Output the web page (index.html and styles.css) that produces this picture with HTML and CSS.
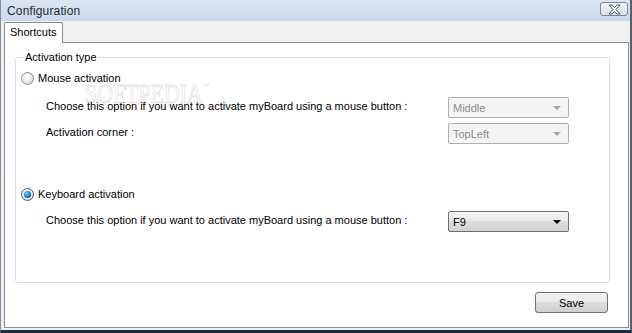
FILE: index.html
```html
<!DOCTYPE html>
<html>
<head>
<meta charset="utf-8">
<link rel="stylesheet" href="styles.css">
</head>
<body>
<div class="window">
  <div class="titlebar">
    <span class="title">Configuration</span>
    <span class="close">
      <svg width="19" height="11" viewBox="0 0 19 11">
        <polygon points="4,1 7,1 9.5,3.5 12,1 15,1 11,5.5 15,10 12,10 9.5,7.5 7,10 4,10 8,5.5" fill="#fff" stroke="#4a5566" stroke-width="1" stroke-linejoin="round"/>
      </svg>
    </span>
  </div>
  <div class="tabs">
    <div class="tab">Shortcuts</div>
  </div>
  <div class="panel">
    <fieldset class="group">
      <legend class="legend">Activation type</legend>
      <span class="watermark">SOFTPEDIA<sup>™</sup></span>
      <div class="row radio-row first">
        <span class="radio"></span>
        <span class="rlabel">Mouse activation</span>
      </div>
      <div class="row opt-row r2">
        <span class="label">Choose this option if you want to activate myBoard using a mouse button :</span>
        <span class="select disabled"><span class="val">Middle</span><span class="arrow"></span></span>
      </div>
      <div class="row opt-row r3">
        <span class="label">Activation corner :</span>
        <span class="select disabled"><span class="val">TopLeft</span><span class="arrow"></span></span>
      </div>
      <div class="row radio-row r4">
        <span class="radio checked"><span class="dot"></span></span>
        <span class="rlabel">Keyboard activation</span>
      </div>
      <div class="row opt-row r5">
        <span class="label">Choose this option if you want to activate myBoard using a mouse button :</span>
        <span class="select"><span class="val">F9</span><span class="arrow"></span></span>
      </div>
    </fieldset>
    <div class="footer">
      <button class="btn">Save</button>
    </div>
  </div>
</div>
</body>
</html>
```

FILE: styles.css
```css
* { box-sizing: border-box; }
html, body { margin: 0; padding: 0; }
body {
  width: 632px;
  height: 333px;
  overflow: hidden;
  font-family: "Liberation Sans", Arial, sans-serif;
  font-size: 11px;
  color: #000;
}
.window {
  width: 632px;
  height: 333px;
  background: #f0f0f0;
  border-left: 1px solid #7f8d9d;
  border-right: 2px solid #55606e;
  border-bottom: 3px solid #1d2a45;
  display: flex;
  flex-direction: column;
}
.titlebar {
  height: 21px;
  flex: none;
  display: flex;
  align-items: center;
  justify-content: space-between;
  padding: 0 2px 0 6px;
  background: linear-gradient(#d9e5f2, #cbd9ea);
}
.title {
  font-size: 12px;
  color: #1f2a36;
  letter-spacing: 0.15px;
}
.close {
  width: 28px;
  height: 14px;
  margin-top: -3px;
  border: 1px solid #7d8796;
  border-radius: 3px;
  background: linear-gradient(#f2f5f9, #d7dfe9);
  display: flex;
  align-items: center;
  justify-content: center;
}
.close svg { display: block; }
.tabs {
  height: 21px;
  flex: none;
  display: flex;
  align-items: flex-end;
  padding-left: 3px;
}
.tab {
  height: 21px;
  width: 59px;
  margin-bottom: -1px;
  position: relative;
  z-index: 1;
  background: #fff;
  border: 1px solid #898c95;
  border-bottom: none;
  border-radius: 2px 2px 0 0;
  padding: 3px 0 0 5px;
  font-size: 11px;
}
.panel {
  flex: 1;
  margin: 0 1px 2px 3px;
  background: #fff;
  border: 1px solid #898c95;
  padding: 7px 18px 0 10px;
  display: flex;
  flex-direction: column;
}
.group {
  margin: 0;
  height: 233px;
  border: 1px solid #d5dfe5;
  border-radius: 3px;
  padding: 0 0 0 5px;
  position: relative;
}
.legend {
  padding: 0 2px 0 1px;
  margin-left: 3px;
  line-height: 14px;
  font-size: 11px;
}
.row {
  display: flex;
  align-items: center;
  position: relative;
}
.radio-row { height: 20px; }
.first { margin-top: 4px; }
.r4 { margin-top: 40px; }
.radio {
  width: 13px;
  height: 13px;
  border-radius: 50%;
  border: 1px solid #8e8f8f;
  background: radial-gradient(circle at 40% 35%, #ffffff 0%, #e6e6e6 55%, #c9c9c9 100%);
  display: flex;
  align-items: center;
  justify-content: center;
}
.radio.checked {
  border-color: #3a5d87;
  background: radial-gradient(circle at 40% 35%, #ffffff 0%, #dfe8f3 60%, #b8c7da 100%);
}
.dot {
  width: 7px;
  height: 7px;
  border-radius: 50%;
  background: radial-gradient(circle at 40% 35%, #8fd0ff 0%, #1a6fc4 55%, #0d3a73 100%);
}
.rlabel { margin-left: 4px; }
.opt-row {
  height: 21px;
  padding-left: 25px;
}
.r2 { margin-top: 9px; }
.r3 { margin-top: 5px; }
.r5 { margin-top: 7px; }
.label {
  width: 402px;
  flex: none;
  margin-top: -3px;
}
.select {
  width: 121px;
  height: 21px;
  border: 1px solid #707070;
  border-radius: 2px;
  background: linear-gradient(#f3f3f3 0%, #ebebeb 45%, #dddddd 50%, #d3d3d3 100%);
  display: flex;
  align-items: center;
  justify-content: space-between;
  padding: 0 7px 0 4px;
}
.select.disabled {
  border-color: #afafaf;
  background: #f4f4f4;
  color: #8c8c8c;
}
.val { font-size: 11px; }
.arrow {
  width: 0;
  height: 0;
  border-left: 4px solid transparent;
  border-right: 4px solid transparent;
  border-top: 4px solid #000;
}
.disabled .arrow { border-top-color: #a6a6a6; }
.watermark {
  position: absolute;
  left: 69px;
  top: 12px;
  font-size: 28px;
  line-height: 20px;
  height: 20px;
  letter-spacing: 0;
  color: #fff;
  -webkit-text-stroke: 1px #e6e6e6;
  font-family: "Liberation Serif", serif;
  transform: scaleX(0.78);
  transform-origin: left center;
  pointer-events: none;
}
.watermark sup { font-size: 9px; vertical-align: 14px; -webkit-text-stroke: 0; color: #dcdcdc; }
.footer {
  display: flex;
  justify-content: flex-end;
  padding-top: 9px;
  padding-right: 2px;
}
.btn {
  width: 73px;
  height: 21px;
  border: 1px solid #707070;
  border-radius: 3px;
  background: linear-gradient(#f2f2f2 0%, #ebebeb 45%, #dddddd 50%, #cfcfcf 100%);
  font-family: "Liberation Sans", Arial, sans-serif;
  font-size: 11px;
  color: #000;
  padding: 0;
}
```
